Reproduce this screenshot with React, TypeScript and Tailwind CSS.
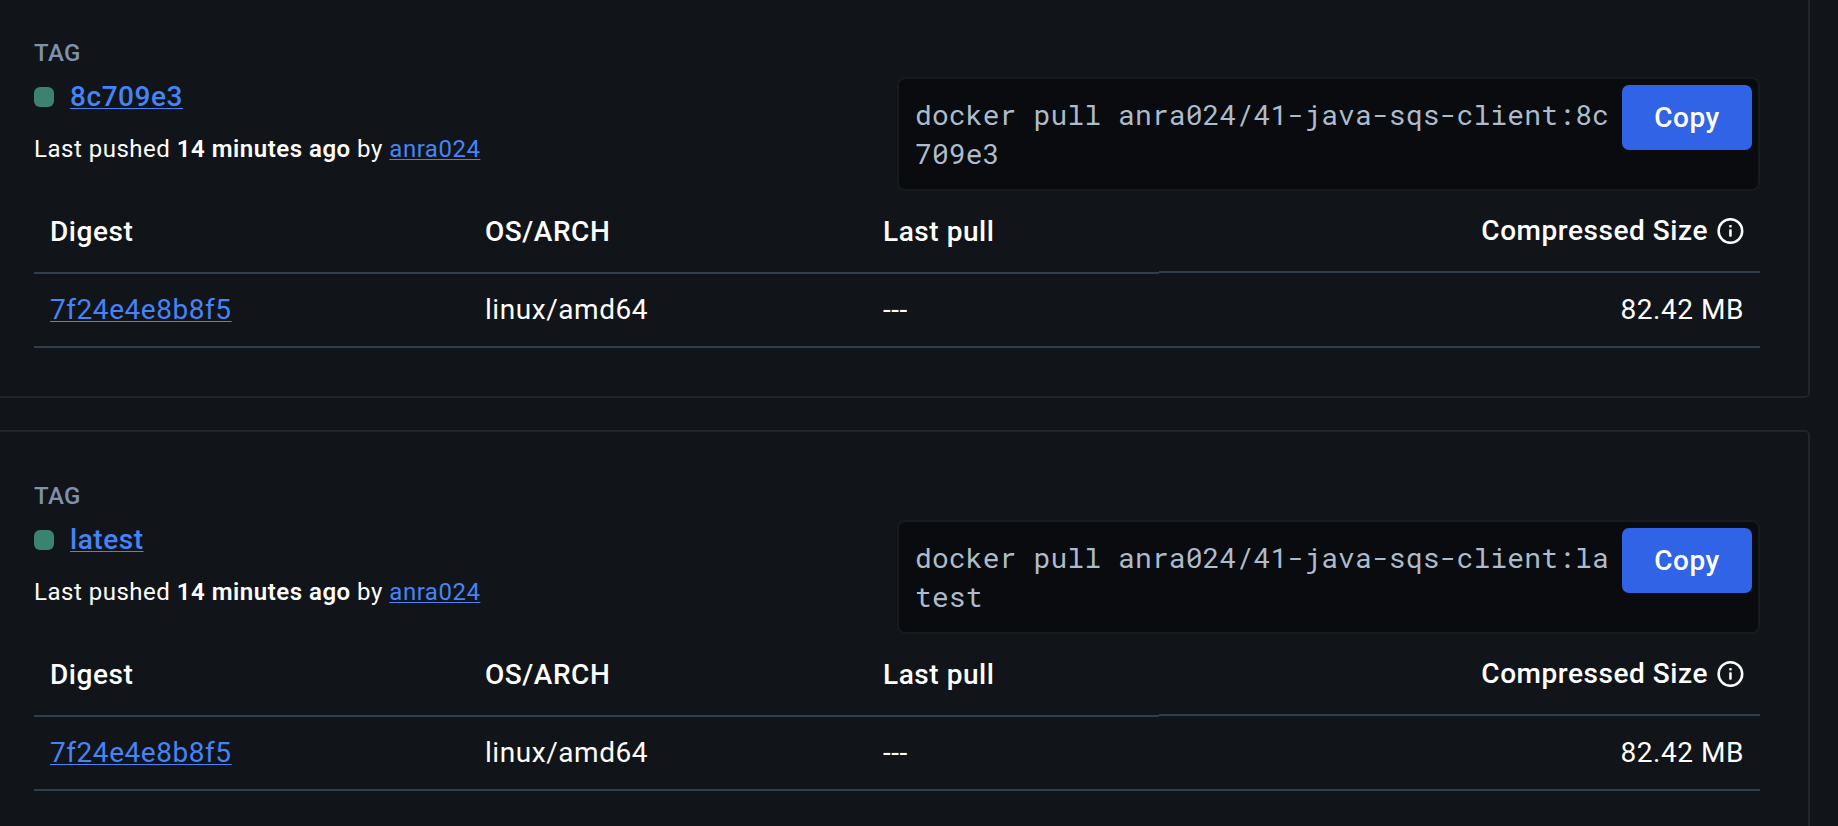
interface Tag {
  name: string;
  digest: string;
  arch: string;
  lastPull: string;
  size: string;
}

const tags: Tag[] = [
  { name: "8c709e3", digest: "7f24e4e8b8f5", arch: "linux/amd64", lastPull: "---", size: "82.42 MB" },
  { name: "latest", digest: "7f24e4e8b8f5", arch: "linux/amd64", lastPull: "---", size: "82.42 MB" },
];

const link = "text-[#4584f7] underline decoration-1 underline-offset-[2px]";
const headCell = "flex items-center border-b-2 border-[#303e4d] px-4 font-medium";
const cell = "flex items-center border-b-2 border-[#303e4d] px-4";

function InfoIcon() {
  return (
    <svg width="28" height="28" viewBox="0 0 28 28">
      <circle cx="14.4" cy="14" r="11.8" fill="none" stroke="currentColor" strokeWidth="2.5" />
      <rect x="13.2" y="8.1" width="2.5" height="2.4" rx="0.7" fill="currentColor" />
      <rect x="13.2" y="12.3" width="2.5" height="7.4" rx="0.7" fill="currentColor" />
    </svg>
  );
}

function TagCard({ tag }: { tag: Tag }) {
  return (
    <section className="h-[411px] w-[1810px] shrink-0 rounded-r-[5px] border-2 border-l-0 border-[#1f262a] pl-[34px] pr-12">
      <div className="flex h-[202px] justify-between">
        <div className="pt-[46px]">
          <div className="h-9 text-2xl leading-9 font-medium tracking-[0.4px] text-[#7d92ab]">TAG</div>
          <div className="mt-[5px] flex h-[42px] items-center gap-4">
            <span className="size-5 rounded-[6px] bg-[#3b8270]" />
            <a className={`${link} font-medium`}>{tag.name}</a>
          </div>
          <div className="mt-[13px] h-9 text-2xl leading-9 tracking-[0.51px]">
            Last pushed <strong className="font-semibold">14 minutes ago</strong> by{" "}
            <a className={link}>anra024</a>
          </div>
        </div>
        <div className="mt-[88px] flex h-[114px] w-[863px] items-start rounded-lg border-2 border-[#161b1e] bg-[#090b0e] pt-1.5 pr-1.5 pl-4">
          <code className="w-[707px] pt-[10px] text-[28px] leading-[39.2px] break-all text-[#adbccc] tracking-[0.12px] font-['Roboto_Mono','DejaVu_Sans_Mono',monospace]">
            {`docker pull anra024/41-java-sqs-client:${tag.name}`}
          </code>
          <button className="h-[65px] w-[130px] rounded-[7px] bg-[#3163e6] font-medium">Copy</button>
        </div>
      </div>
      <div className="grid grid-cols-[435px_398px_292px_601px]">
        <div className={`${headCell} h-[83px]`}>Digest</div>
        <div className={`${headCell} h-[83px]`}>OS/ARCH</div>
        <div className={`${headCell} h-[83px]`}>Last pull</div>
        <div className={`${headCell} h-[82px] justify-end gap-2`}>
          Compressed Size
          <InfoIcon />
        </div>
        <div className={`${cell} h-[74px]`}>
          <a className={link}>{tag.digest}</a>
        </div>
        <div className={`${cell} h-[74px]`}>{tag.arch}</div>
        <div className={`${cell} h-[74px]`}>{tag.lastPull}</div>
        <div className={`${cell} h-[74px] justify-end`}>{tag.size}</div>
      </div>
    </section>
  );
}

export default function App() {
  return (
    <main className="h-screen w-full overflow-hidden bg-[#111418] font-[Roboto,sans-serif] text-[28px] leading-[42px] tracking-[0.55px] text-white">
      <div className="-mt-[13px] flex flex-col gap-8">
        {tags.map((tag) => (
          <TagCard key={tag.name} tag={tag} />
        ))}
      </div>
    </main>
  );
}
